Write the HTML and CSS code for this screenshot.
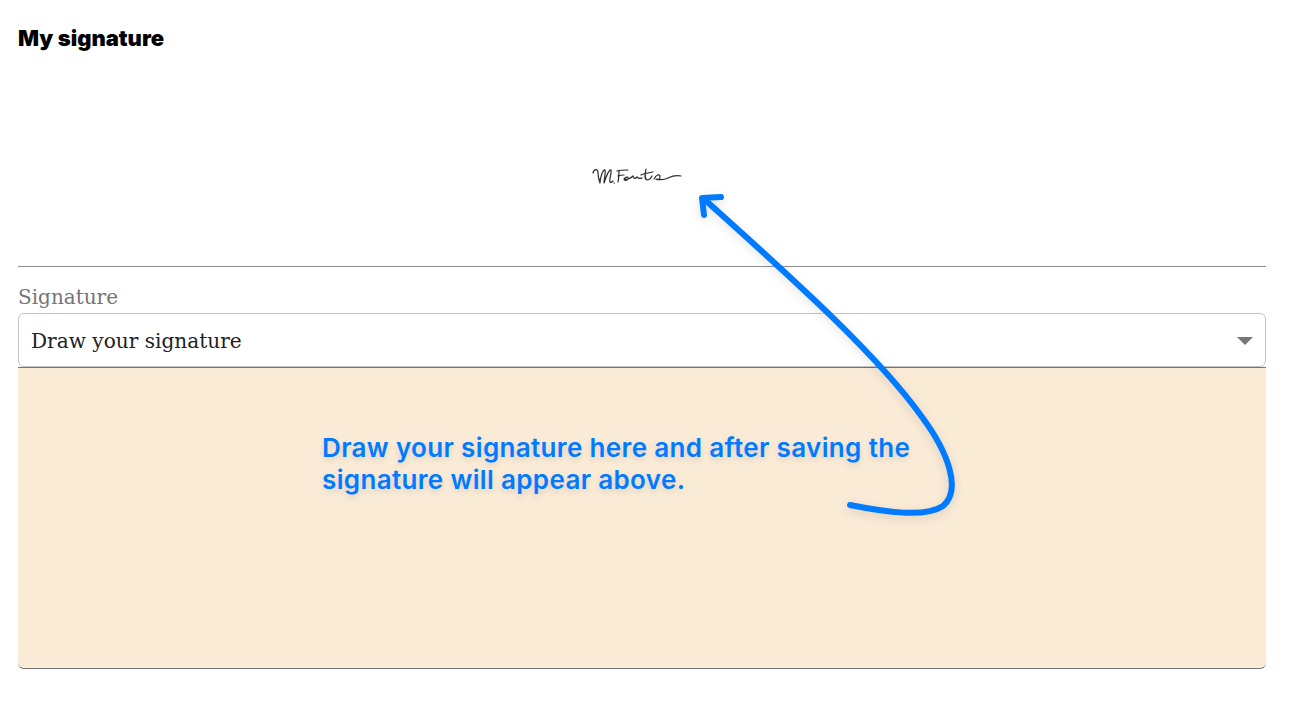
FILE: index.html
```html
<!DOCTYPE html>
<html lang="en">
<head>
    <meta charset="UTF-8">
    <meta name="viewport" content="width=device-width, initial-scale=1.0">
    <title>My signature</title>
    <link rel="stylesheet" href="styles.css">
</head>
<body>
    <div class="page">
        <h1 class="title">My signature</h1>
        <div class="preview">
            <svg class="sig" width="100" height="24" viewBox="0 0 100 24" fill="none" stroke="#2b2b2b" stroke-width="1.2" stroke-linecap="round" stroke-linejoin="round">
                <path d="M2 5 C3 1 7 0 7 5 C7 9 8 12 9 15 C9 10 12 1 14 2 C15 4 13 11 13 15 C15 9 18 1 20 2 C21 4 18 11 19 14 C20 15 21 14 22 13"/>
                <path d="M23 15 L23.5 15"/>
                <path d="M27 14 C28 10 28 7 28 3 M26 3 C29 2 33 2 37 2 M27 8 C29 7 31 7 33 7"/>
                <path d="M33 11 C35 8 38 9 37 11 C36 13 33 13 33 11 C35 12 39 11 42 8 C43 11 44 11 46 9 C48 11 49 11 51 10"/>
                <path d="M55 1 C54 6 53 11 56 12 C58 12 60 10 61 8 M50 7 C54 5 58 5 62 4"/>
                <path d="M63 11 C65 7 69 5 69 9 C69 12 66 12 65 11 C69 12 73 12 77 10 C81 8 85 7 90 8"/>
            </svg>
        </div>
        <label class="field-label">Signature</label>
        <div class="select">
            <span>Draw your signature</span>
            <span class="caret"></span>
        </div>
        <div class="canvas"></div>
    </div>

    <svg class="arrow" width="1300" height="702" viewBox="0 0 1300 702" fill="none" stroke="#007aff" stroke-width="6" stroke-linecap="round" stroke-linejoin="round">
        <path d="M850 505 C885 512 925 518 943 506 C962 490 948 452 922 417 C880 358 800 285 704 199"/>
        <path d="M704 215 L702 198 L721 197"/>
    </svg>
    <p class="note">Draw your signature here and after saving the signature will appear above.</p>
</body>
</html>
```

FILE: styles.css
```css
body {
    margin: 0;
    background-color: white;
    overflow: hidden;
}

.page {
    width: 1248px;
    margin-left: 18px;
}

.title {
    margin: 0;
    padding-top: 25px;
    height: 57px;
    box-sizing: border-box;
    font-family: Inter, sans-serif;
    font-size: 22px;
    font-weight: 900;
    line-height: 26px;
    color: black;
}

.preview {
    height: 209px;
    border-bottom: 1px solid #8f8f8f;
    display: flex;
    justify-content: center;
}

.sig {
    margin-top: 111px;
    margin-left: -2px;
}

.field-label {
    display: block;
    height: 47px;
    padding-top: 16px;
    box-sizing: border-box;
    font-family: "DejaVu Serif", serif;
    font-size: 20px;
    line-height: 28px;
    color: #757575;
    margin-bottom: -1px;
}

.select {
    height: 54px;
    box-sizing: border-box;
    display: flex;
    justify-content: space-between;
    align-items: center;
    padding: 1px 12px 0;
    border: 1px solid #c4c4c4;
    border-radius: 6px;
    font-family: "DejaVu Serif", serif;
    font-size: 20.1px;
    color: #222;
}

.caret {
    width: 0;
    height: 0;
    border-left: 8px solid transparent;
    border-right: 8px solid transparent;
    border-top: 8px solid #767676;
}

.canvas {
    height: 302px;
    box-sizing: border-box;
    background-color: #faebd7;
    border-top: 1px solid #757575;
    border-bottom: 1px solid #757575;
    border-radius: 0 0 6px 6px;
}

.arrow {
    position: absolute;
    left: 0;
    top: 0;
    filter: drop-shadow(0 3px 5px rgba(0, 0, 0, 0.12));
}

.note {
    position: absolute;
    left: 322px;
    top: 432px;
    width: 620px;
    margin: 0;
    font-family: Inter, sans-serif;
    font-size: 26px;
    font-weight: 600;
    letter-spacing: 0.35px;
    line-height: 32px;
    color: #007aff;
    text-shadow: 0 3px 6px rgba(0, 0, 0, 0.12);
}
```
